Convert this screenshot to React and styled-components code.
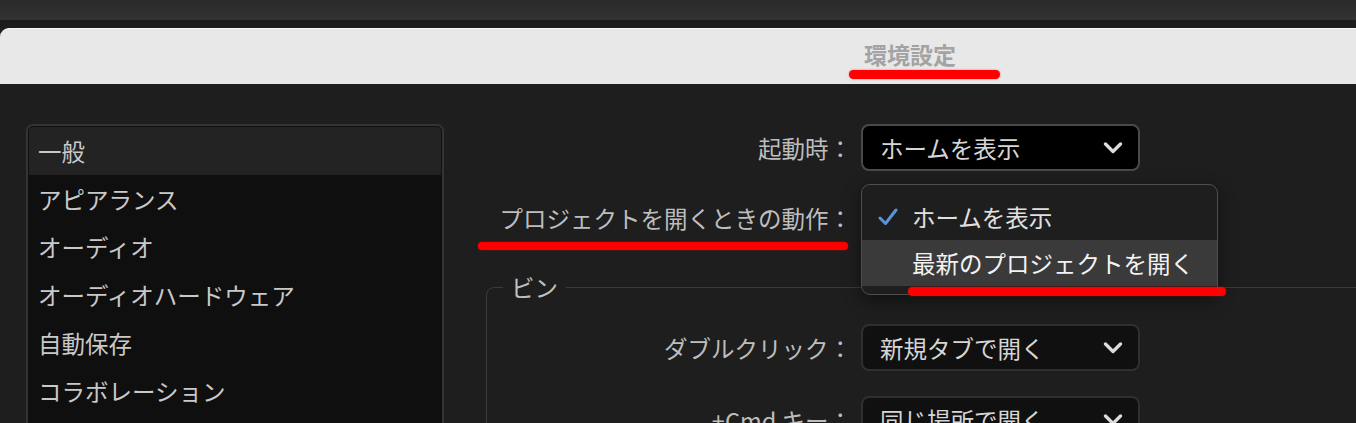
import React from 'react';
import styled, { createGlobalStyle } from 'styled-components';

const Global = createGlobalStyle`
  html, body { margin: 0; padding: 0; background: #1e1e1e; overflow: hidden; }
  body { font-family: "Noto Sans CJK JP", "Noto Sans", sans-serif; }
  #root { width: 1356px; height: 423px; overflow: hidden; }
`;

const Screen = styled.div`
  width: 1356px;
  height: 423px;
  overflow: hidden;
  display: flex;
  flex-direction: column;
  background: #1e1e1e;
`;

const MenuStrip = styled.div`
  flex: none;
  height: 20px;
  background: linear-gradient(#2a2a2a, #333333);
`;

const Spacer = styled.div`
  flex: none;
  height: 8px;
  background: #1d1d1d;
`;

const Window = styled.div`
  flex: none;
  width: 1820px;
  display: flex;
  flex-direction: column;
`;

const TitleBar = styled.div`
  box-sizing: border-box;
  height: 56px;
  background: #e8e8e8;
  border-top: 1px solid #f8f8f8;
  border-radius: 9px 9px 0 0;
  display: flex;
  justify-content: center;
  padding-top: 11px;
`;

const Title = styled.div`
  position: relative;
  height: 28px;
  font-size: 23px;
  line-height: 28px;
  font-weight: 700;
  color: #a3a3a3;
`;

const Mark = styled.span`
  position: absolute;
  z-index: 5;
  left: ${(p) => p.$left}px;
  top: ${(p) => p.$top}px;
  width: ${(p) => p.$width}px;
  height: ${(p) => p.$height}px;
  background: #ff0000;
  border-radius: 5px;
  box-shadow: 0 0 2px rgba(255, 0, 0, 0.6);
`;

const Body = styled.div`
  display: grid;
  grid-template-columns: 418px 1fr;
  column-gap: 42px;
  padding: 40px 0 0 26px;
  height: 400px;
  background: #1e1e1e;
`;

const SidePanel = styled.div`
  box-sizing: border-box;
  height: 360px;
  border: 2px solid #343434;
  border-radius: 7px;
  background: #0f0f0f;
  padding: 1px;
  display: flex;
  flex-direction: column;
`;

const SideItem = styled.div`
  height: 48px;
  flex: none;
  display: flex;
  align-items: center;
  padding-left: 9px;
  font-size: 23.5px;
  line-height: 30px;
  color: #c9c9c9;
  background: ${(p) => (p.$selected ? '#232323' : 'transparent')};
  border-radius: ${(p) => (p.$selected ? '4px 4px 0 0' : '0')};
`;

const Content = styled.div`
  display: flex;
  flex-direction: column;
`;

const FormRow = styled.div`
  position: relative;
  display: grid;
  grid-template-columns: ${(p) => p.$labelWidth}px 279px;
  column-gap: 9px;
  align-items: center;
  height: 47px;
  margin-top: ${(p) => p.$top || 0}px;
`;

const Label = styled.div`
  text-align: right;
  white-space: nowrap;
  font-size: 23.5px;
  line-height: 30px;
  color: #bdbdbd;
`;

const SelectSlot = styled.div`
  position: relative;
  width: 279px;
  height: 47px;
`;

const Select = styled.div`
  box-sizing: border-box;
  width: 279px;
  height: 47px;
  border-radius: 8px;
  border: 2px solid ${(p) => (p.$active ? '#4a4a4a' : '#2f2f2f')};
  background: ${(p) => (p.$active ? '#000000' : '#101010')};
  display: flex;
  align-items: center;
  justify-content: space-between;
  padding: 0 15px 0 17px;
  font-size: 23.5px;
  line-height: 30px;
  color: #d6d6d6;
  white-space: nowrap;
`;

const Menu = styled.div`
  box-sizing: border-box;
  position: absolute;
  z-index: 3;
  top: -10px;
  left: 0;
  width: 357px;
  padding: 8px 0;
  background: #1e1e1e;
  border: 1.5px solid #4e4e4e;
  border-radius: 9px;
  box-shadow: 0 6px 18px rgba(0, 0, 0, 0.45);
  display: flex;
  flex-direction: column;
`;

const MenuItem = styled.div`
  height: ${(p) => p.$h}px;
  display: flex;
  align-items: center;
  padding-left: 16px;
  font-size: 23.5px;
  line-height: 30px;
  white-space: nowrap;
  color: ${(p) => (p.$active ? '#f3f3f3' : '#e0e0e0')};
  background: ${(p) => (p.$active ? '#3a3a3a' : 'transparent')};
`;

const CheckSlot = styled.span`
  width: 34px;
  flex: none;
  display: flex;
  align-items: center;
`;

const Group = styled.fieldset`
  box-sizing: border-box;
  margin: 32px 0 0 0;
  padding: 23px 0 40px 0;
  width: 1000px;
  border: 1px solid #3a3a3a;
  border-radius: 8px;
  display: flex;
  flex-direction: column;
  gap: 25px;
`;

const GroupLegend = styled.legend`
  margin-left: 16px;
  padding: 0 8px;
  font-size: 23.5px;
  line-height: 28px;
  color: #c0c0c0;
`;

const Chevron = () => (
  <svg width="20" height="12" viewBox="0 0 20 12">
    <path d="M2.5 2 L10 9.5 L17.5 2" fill="none" stroke="#dcdcdc" strokeWidth="3.3" strokeLinecap="round" strokeLinejoin="round" />
  </svg>
);

const Check = () => (
  <svg width="20" height="18" viewBox="0 0 20 18">
    <path d="M2 10 L7.5 15.5 L18 2" fill="none" stroke="#5b92dc" strokeWidth="3" strokeLinecap="round" strokeLinejoin="round" />
  </svg>
);

const sideItems = ['一般', 'アピアランス', 'オーディオ', 'オーディオハードウェア', '自動保存', 'コラボレーション'];

export default function App() {
  return (
    <>
      <Global />
      <Screen>
        <MenuStrip />
        <Spacer />
        <Window>
          <TitleBar>
            <Title>
              環境設定
              <Mark $left={-15} $top={30} $width={151} $height={9} />
            </Title>
          </TitleBar>
          <Body>
            <SidePanel>
              {sideItems.map((t, i) => (
                <SideItem key={t} $selected={i === 0}>{t}</SideItem>
              ))}
            </SidePanel>
            <Content>
              <FormRow $labelWidth={366}>
                <Label>起動時：</Label>
                <Select $active>
                  <span>ホームを表示</span>
                  <Chevron />
                </Select>
              </FormRow>
              <FormRow $labelWidth={366} $top={23}>
                <Label>プロジェクトを開くときの動作：</Label>
                <Mark $left={-8} $top={48} $width={370} $height={8} />
                <SelectSlot>
                  <Menu>
                    <MenuItem $h={47}>
                      <CheckSlot><Check /></CheckSlot>
                      ホームを表示
                    </MenuItem>
                    <MenuItem $h={46} $active>
                      <CheckSlot />
                      最新のプロジェクトを開く
                    </MenuItem>
                    <Mark $left={45.5} $top={101.5} $width={318} $height={9} />
                  </Menu>
                </SelectSlot>
              </FormRow>
              <Group>
                <GroupLegend>ビン</GroupLegend>
                <FormRow $labelWidth={365}>
                  <Label>ダブルクリック：</Label>
                  <Select>
                    <span>新規タブで開く</span>
                    <Chevron />
                  </Select>
                </FormRow>
                <FormRow $labelWidth={365}>
                  <Label>+Cmd キー：</Label>
                  <Select>
                    <span>同じ場所で開く</span>
                    <Chevron />
                  </Select>
                </FormRow>
              </Group>
            </Content>
          </Body>
        </Window>
      </Screen>
    </>
  );
}
